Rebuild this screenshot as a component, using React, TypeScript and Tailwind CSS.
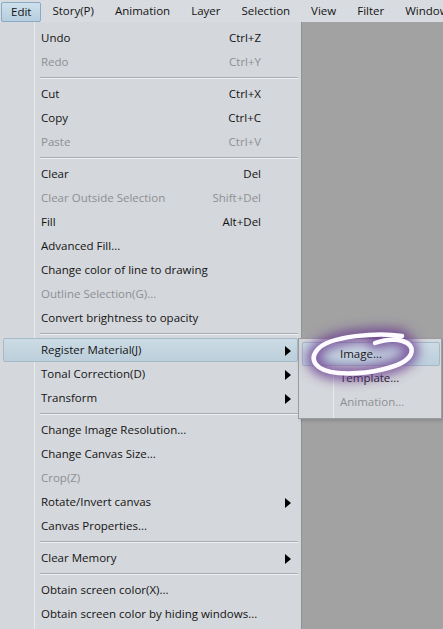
import type { ReactNode } from "react";

type Entry =
    | { kind: "sep" }
    | { kind: "item"; label: string; shortcut?: string; disabled?: boolean; sub?: boolean; active?: boolean };

const menuBar = ["Edit", "Story(P)", "Animation", "Layer", "Selection", "View", "Filter", "Window"];

const editMenu: Entry[] = [
    { kind: "item", label: "Undo", shortcut: "Ctrl+Z" },
    { kind: "item", label: "Redo", shortcut: "Ctrl+Y", disabled: true },
    { kind: "sep" },
    { kind: "item", label: "Cut", shortcut: "Ctrl+X" },
    { kind: "item", label: "Copy", shortcut: "Ctrl+C" },
    { kind: "item", label: "Paste", shortcut: "Ctrl+V", disabled: true },
    { kind: "sep" },
    { kind: "item", label: "Clear", shortcut: "Del" },
    { kind: "item", label: "Clear Outside Selection", shortcut: "Shift+Del", disabled: true },
    { kind: "item", label: "Fill", shortcut: "Alt+Del" },
    { kind: "item", label: "Advanced Fill..." },
    { kind: "item", label: "Change color of line to drawing" },
    { kind: "item", label: "Outline Selection(G)...", disabled: true },
    { kind: "item", label: "Convert brightness to opacity" },
    { kind: "sep" },
    { kind: "item", label: "Register Material(J)", sub: true, active: true },
    { kind: "item", label: "Tonal Correction(D)", sub: true },
    { kind: "item", label: "Transform", sub: true },
    { kind: "sep" },
    { kind: "item", label: "Change Image Resolution..." },
    { kind: "item", label: "Change Canvas Size..." },
    { kind: "item", label: "Crop(Z)", disabled: true },
    { kind: "item", label: "Rotate/Invert canvas", sub: true },
    { kind: "item", label: "Canvas Properties..." },
    { kind: "sep" },
    { kind: "item", label: "Clear Memory", sub: true },
    { kind: "sep" },
    { kind: "item", label: "Obtain screen color(X)..." },
    { kind: "item", label: "Obtain screen color by hiding windows..." },
];

const materialMenu: Entry[] = [
    { kind: "item", label: "Image...", active: true },
    { kind: "item", label: "Template..." },
    { kind: "item", label: "Animation...", disabled: true },
];

// loose pen stroke circling the first flyout entry
const ring =
    "M375 343 C395 336 416 341 411 354 C405 368 365 375 338 373 C316 371 308 360 318 349 C330 336 378 332 402 336";

function Arrow() {
    return (
        <svg width="6" height="10" viewBox="0 0 6 10" className="absolute right-[6px] top-[7px]">
            <polygon points="0,0 6,5 0,10" fill="#000" />
        </svg>
    );
}

function Row({ entry }: { entry: Entry }) {
    if (entry.kind === "sep") {
        return (
            <div className="h-[8px] pt-[3px] pl-[37px]">
                <div className="h-[2px] border-t border-[#a9abae] border-b border-b-[#eef0f2]" />
            </div>
        );
    }
    const tone = entry.disabled ? "text-[#8e9093]" : "text-[#141414]";
    const box = entry.active
        ? "border border-[#a5bac9] rounded-[2px] bg-[linear-gradient(#ccdbe5,#bccfdb)]"
        : "border border-transparent";
    return (
        <div className={`relative h-[24px] flex items-center pl-[37px] pr-[36px] ${box} ${tone}`}>
            <span className="flex-1 whitespace-nowrap">{entry.label}</span>
            {entry.shortcut && <span className="whitespace-nowrap">{entry.shortcut}</span>}
            {entry.sub && <Arrow />}
        </div>
    );
}

function MenuPanel({ children, className }: { children: ReactNode; className: string }) {
    return (
        <div
            className={`bg-[linear-gradient(to_right,#d4d7db_34px,#e9ebed_34px,#e9ebed_35px,#d4d7db_35px)] ${className}`}
        >
            {children}
        </div>
    );
}

export default function App() {
    return (
        <div
            className="relative w-[443px] h-[629px] overflow-hidden flex flex-col bg-[#a2a2a2] text-[11.5px] leading-none"
            style={{ fontFamily: '"Open Sans", "Noto Sans", sans-serif' }}
        >
            {/* menu bar */}
            <div className="h-[22px] shrink-0 flex items-center bg-[#d8dce0] text-[#141414] pl-[1px] gap-[1px] whitespace-nowrap">
                {menuBar.map((name, i) => (
                    <div
                        key={name}
                        className={
                            i === 0
                                ? "h-[20px] mt-[1px] px-[9px] flex items-center rounded-[2px] border border-[#8aaac3] bg-[linear-gradient(#cde0ec,#b6cee0)]"
                                : "h-[20px] px-[10px] flex items-center"
                        }
                    >
                        {name}
                    </div>
                ))}
            </div>

            {/* edit menu dropped down over the canvas */}
            <div className="flex-1 flex">
                <MenuPanel className="w-[302px] shrink-0 border-r border-[#8f9193] pt-[4px] pl-[3px] pr-[3px]">
                    {editMenu.map((e, i) => (
                        <Row key={i} entry={e} />
                    ))}
                </MenuPanel>
                <div className="flex-1" />
            </div>

            {/* Register Material flyout */}
            <MenuPanel className="absolute left-[298px] top-[338px] w-[144px] border border-[#9b9da0] pt-[3px] pb-[4px] pl-[3px] pr-[1px] shadow-[2px_2px_3px_rgba(0,0,0,0.15)]">
                {materialMenu.map((e, i) => (
                    <Row key={i} entry={e} />
                ))}
            </MenuPanel>

            <svg className="absolute left-0 top-0 pointer-events-none" width="443" height="629" viewBox="0 0 443 629">
                <defs>
                    <filter id="glow" x="-30%" y="-80%" width="160%" height="260%">
                        <feGaussianBlur stdDeviation="6" />
                    </filter>
                </defs>
                <path d={ring} fill="none" stroke="#6a3a8e" strokeOpacity="0.85" strokeWidth="13" strokeLinecap="round" filter="url(#glow)" />
                <path d={ring} fill="none" stroke="#fdfbff" strokeWidth="4.5" strokeLinecap="round" />
            </svg>
        </div>
    );
}
